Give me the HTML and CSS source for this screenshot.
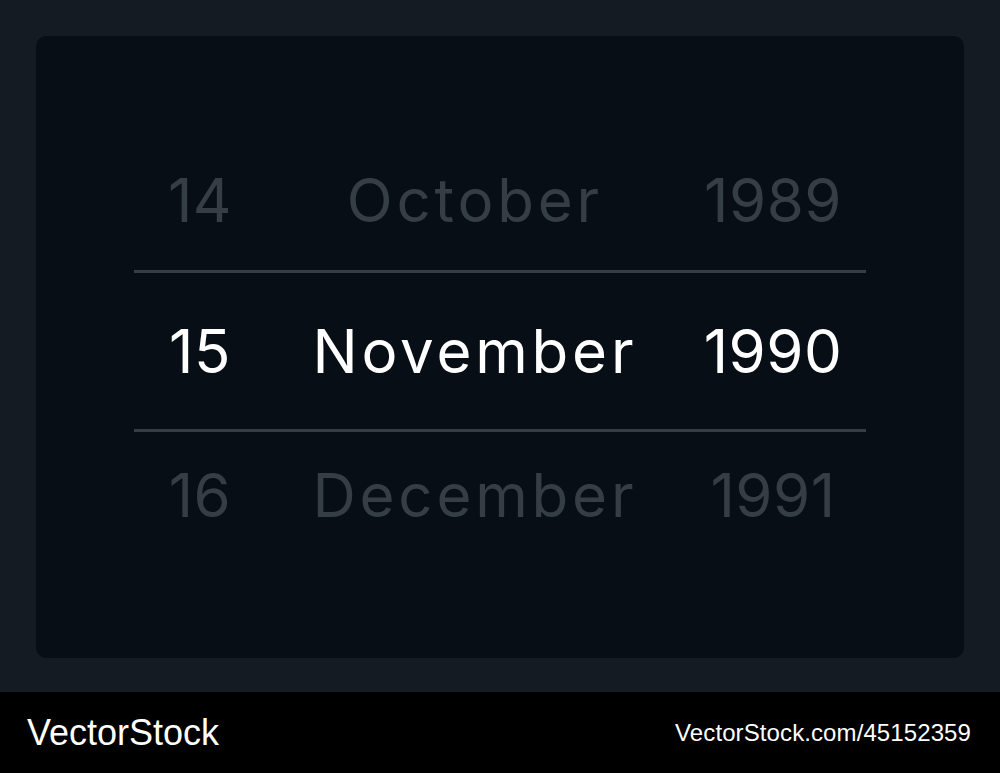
FILE: index.html
```html
<!DOCTYPE html>
<html lang="en">

<head>
    <meta charset="UTF-8">
    <meta name="viewport" content="width=device-width, initial-scale=1.0">
    <title>Date Picker</title>
    <link rel="stylesheet" href="styles.css">
</head>

<body>
    <main class="card">
        <div class="picker">
            <!-- Previous values -->
            <div class="picker-row row-prev faded">
                <span class="day">14</span>
                <span class="month">October</span>
                <span class="year">1989</span>
            </div>

            <div class="divider"></div>

            <!-- Selected value -->
            <div class="picker-row row-current selected">
                <span class="day">15</span>
                <span class="month">November</span>
                <span class="year">1990</span>
            </div>

            <div class="divider"></div>

            <!-- Next values -->
            <div class="picker-row row-next faded">
                <span class="day">16</span>
                <span class="month">December</span>
                <span class="year">1991</span>
            </div>
        </div>
    </main>

    <footer class="footer">
        <span class="brand">VectorStock</span>
        <span class="ref">VectorStock.com/45152359</span>
    </footer>
</body>

</html>
```

FILE: styles.css
```css
body {
    margin: 0;
    background-color: #151b22;
    font-family: Inter, "Noto Sans", sans-serif;
}

.card {
    margin: 36px 36px 0 36px;
    height: 622px;
    box-sizing: border-box;
    padding: 94px 98px 0 98px;
    background-color: #070e15;
    border-radius: 10px;
}

.picker {
    width: 732px;
}

.picker-row {
    display: grid;
    grid-template-columns: 132px 414px 186px; /* day / month / year */
    align-items: center;
    text-align: center;
    font-size: 60px;
    line-height: 1;
    letter-spacing: 0.5px;
}

.picker-row .month {
    letter-spacing: 3.8px;
    padding-left: 3.8px; /* balance the trailing spacing */
}

.row-prev {
    height: 140px;
}

.row-current {
    height: 156px;
}

.row-next {
    height: 126px;
}

.faded {
    color: #353e45;
}

.selected {
    color: #ffffff;
}

.divider {
    height: 3px;
    background-color: #353e45;
}

.footer {
    margin-top: 34px;
    height: 81px;
    background-color: #000000;
    display: flex;
    align-items: center;
    justify-content: space-between;
    padding: 0 29px 0 27px;
    color: #ffffff;
    font-family: "Liberation Sans", Arial, sans-serif;
}

.brand {
    font-size: 36px;
    letter-spacing: 0;
}

.ref {
    font-size: 24px;
    letter-spacing: 0.1px;
}
```
